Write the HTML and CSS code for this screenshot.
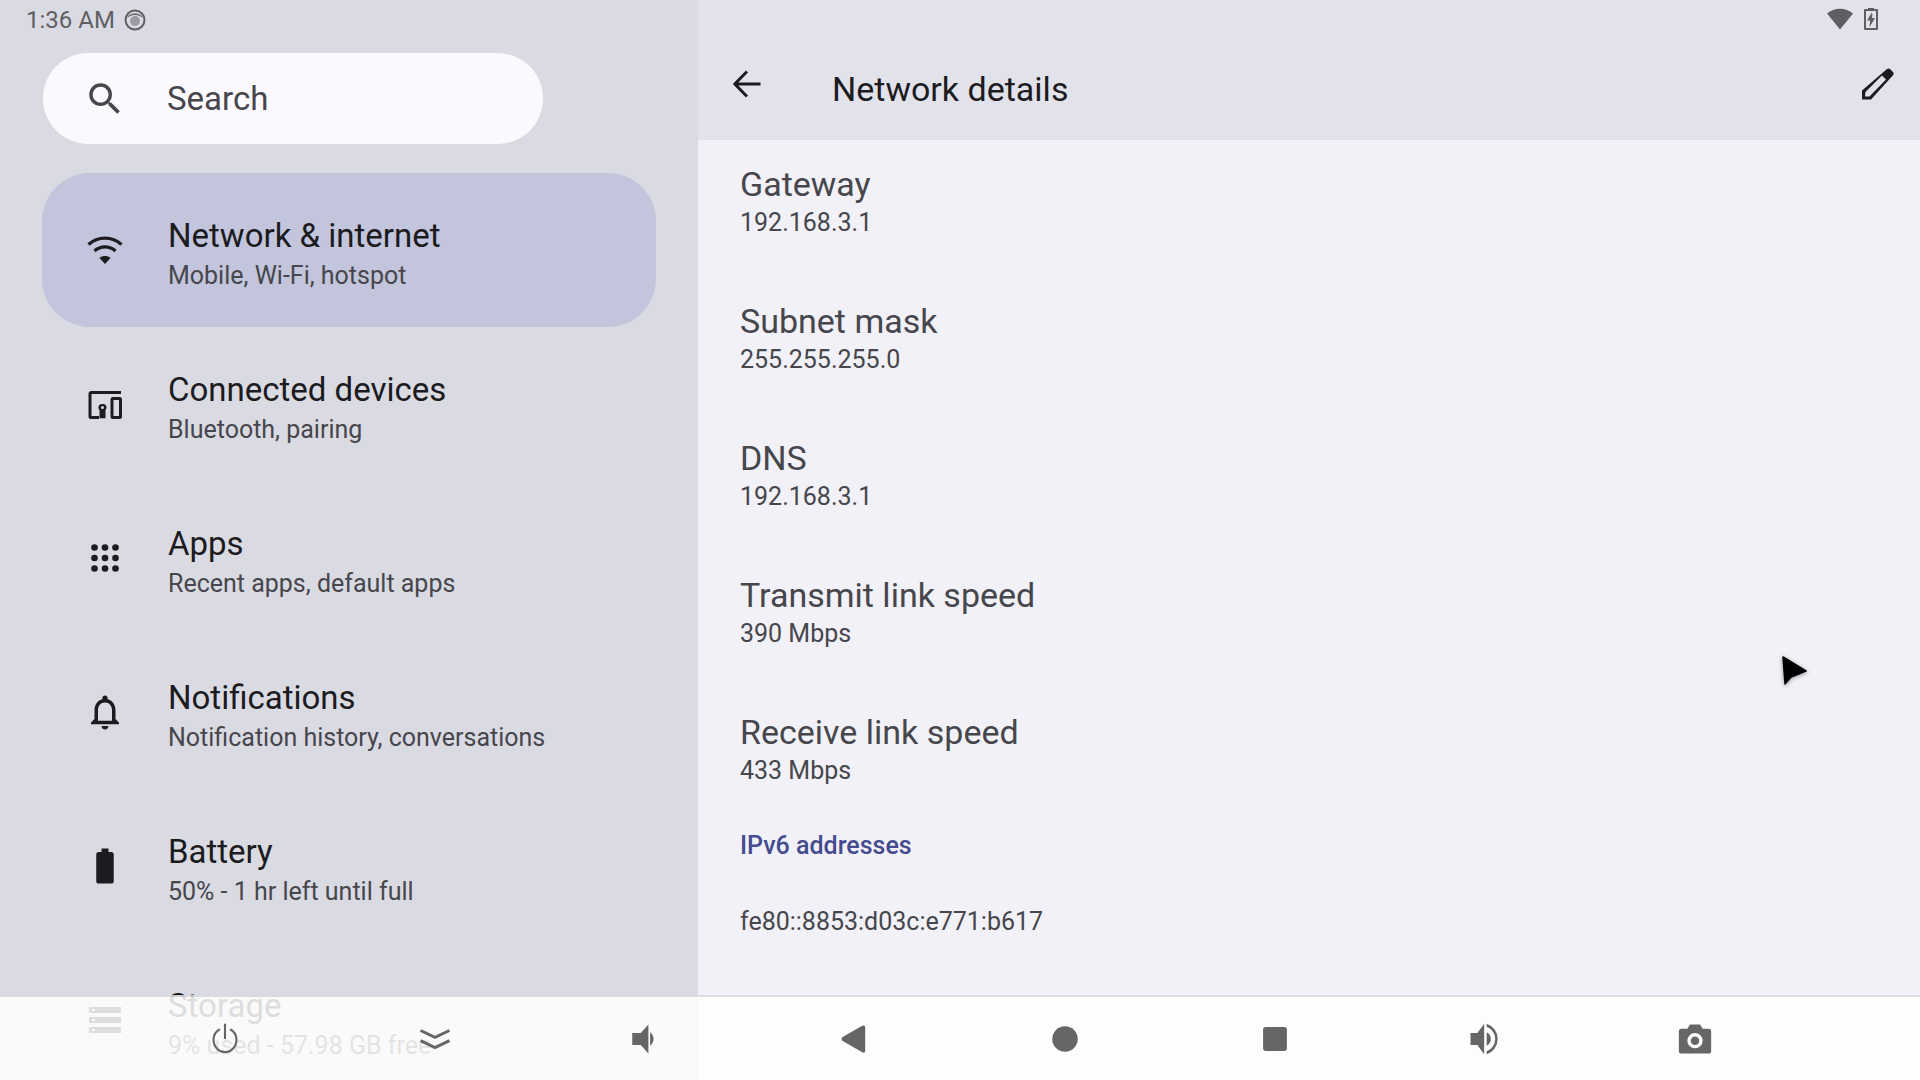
FILE: index.html
```html
<!DOCTYPE html>
<html lang="en">
<head>
  <meta charset="UTF-8">
  <title>Network details</title>
  <link rel="stylesheet" href="styles.css">
</head>
<body>
  <div class="screen">
    <aside class="sidebar">
      <div class="status-left">
        <span class="clock">1:36 AM</span>
        <svg class="face" viewBox="0 0 22 22"><circle cx="11" cy="11" r="9.5" fill="none" stroke="#5f5f63" stroke-width="2"/><path d="M3 9c2-6 14-6 16 0-3-2-4-3-8-3S6 7 3 9z" fill="#5f5f63"/><circle cx="11" cy="12" r="5" fill="#9a9aa0"/></svg>
      </div>
      <div class="search">
        <svg class="search-icon" viewBox="0 0 24 24"><path d="M15.5 14h-.79l-.28-.27A6.471 6.471 0 0 0 16 9.5 6.5 6.5 0 1 0 9.5 16c1.61 0 3.09-.59 4.23-1.57l.27.28v.79l5 4.99L20.49 19l-4.99-5zm-6 0C7.01 14 5 11.99 5 9.5S7.01 5 9.5 5 14 7.01 14 9.5 11.99 14 9.5 14z"/></svg>
        <span>Search</span>
      </div>
      <nav class="menu">
        <div class="menu-item active">
          <svg class="menu-icon" viewBox="0 0 42 42"><g fill="none" stroke="#1c1b20" stroke-width="3.4"><path d="M4.5 15.5c9.5-8.5 23.5-8.5 33 0"/><path d="M10.5 22c6-5.5 15-5.5 21 0"/></g><path d="M21 35l-5.5-6c3-2.6 8-2.6 11 0z" fill="#1c1b20"/></svg>
          <div class="menu-text"><div class="menu-title">Network &amp; internet</div><div class="menu-sub">Mobile, Wi-Fi, hotspot</div></div>
        </div>
        <div class="menu-item">
          <svg class="menu-icon" viewBox="0 0 42 42"><g fill="none" stroke="#1c1b20" stroke-width="3"><path d="M37 9.500H7.500a1.500 1.500 0 0 0-1.500 1.500v22.500a1 1 0 0 0 1 1h8"/><rect x="28" y="15.500" width="8.500" height="19" rx="1"/></g><path d="M18.500 21a3.600 3.600 0 0 1 3 6.200v8h-6v-8a3.600 3.600 0 0 1 3-6.200z" fill="#1c1b20"/><circle cx="18.500" cy="24.500" r="1.500" fill="#dadae3"/></svg>
          <div class="menu-text"><div class="menu-title">Connected devices</div><div class="menu-sub">Bluetooth, pairing</div></div>
        </div>
        <div class="menu-item">
          <svg class="menu-icon" viewBox="0 0 42 42" fill="#1c1b20"><circle cx="10.500" cy="10.500" r="3.300"/><circle cx="21" cy="10.500" r="3.300"/><circle cx="31.500" cy="10.500" r="3.300"/><circle cx="10.500" cy="21" r="3.300"/><circle cx="21" cy="21" r="3.300"/><circle cx="31.500" cy="21" r="3.300"/><circle cx="10.500" cy="31.500" r="3.300"/><circle cx="21" cy="31.500" r="3.300"/><circle cx="31.500" cy="31.500" r="3.300"/></svg>
          <div class="menu-text"><div class="menu-title">Apps</div><div class="menu-sub">Recent apps, default apps</div></div>
        </div>
        <div class="menu-item">
          <svg class="menu-icon" viewBox="0 0 24 24" fill="#1c1b20"><path d="M12 22c1.100 0 2-.9 2-2h-4c0 1.100.9 2 2 2zm6-6v-5c0-3.070-1.630-5.640-4.500-6.320V4c0-.83-.67-1.500-1.500-1.500s-1.500.67-1.500 1.500v.68C7.640 5.360 6 7.920 6 11v5l-2 2v1h16v-1l-2-2zm-2 1H8v-6c0-2.480 1.510-4.500 4-4.500s4 2.020 4 4.500v6z"/></svg>
          <div class="menu-text"><div class="menu-title">Notifications</div><div class="menu-sub">Notification history, conversations</div></div>
        </div>
        <div class="menu-item">
          <svg class="menu-icon" viewBox="0 0 24 24" fill="#1c1b20"><path d="M15.670 4H14V2h-4v2H8.330C7.600 4 7 4.600 7 5.330v15.330C7 21.400 7.600 22 8.330 22h7.330c.74 0 1.340-.6 1.340-1.330V5.330C17 4.600 16.400 4 15.670 4z"/></svg>
          <div class="menu-text"><div class="menu-title">Battery</div><div class="menu-sub">50% - 1 hr left until full</div></div>
        </div>
        <div class="menu-item">
          <svg class="menu-icon" viewBox="0 0 42 42" fill="#1c1b20"><path fill-rule="evenodd" d="M5 8h32v6H5zM8 10v2h3v-2zM5 18h32v6H5zM8 20v2h3v-2zM5 28h32v6H5zM8 30v2h3v-2z"/></svg>
          <div class="menu-text"><div class="menu-title">Storage</div><div class="menu-sub">9% used - 57.98 GB free</div></div>
        </div>
      </nav>
    </aside>

    <main class="details">
      <header class="appbar">
        <div class="status-right">
          <svg class="wifi-status" viewBox="0 0 26 22"><path d="M13 21.500L0 5.500C7-1 19-1 26 5.500z" fill="#5f5f63"/></svg>
          <svg class="battery-status" viewBox="0 0 14 22"><path fill-rule="evenodd" d="M4 0h6v1h3a1 1 0 0 1 1 1v19a1 1 0 0 1-1 1H1a1 1 0 0 1-1-1V2a1 1 0 0 1 1-1h3zM2 3v17h10V3zM8 4L3 12.500h3.200L5.500 19l5.500-9H7.500z" fill="#5f5f63"/><path d="M8.500 5.500L4.500 12h2.500L6.500 17l4-6.500H8z" fill="#5f5f63"/></svg>
        </div>
        <div class="toolbar">
          <svg class="back" viewBox="0 0 28 28"><path d="M27.500 14H3M14 1.500L1.800 14 14 26.500" fill="none" stroke="#1c1b20" stroke-width="3"/></svg>
          <h1>Network details</h1>
          <svg class="edit" viewBox="0 0 32 32"><path fill-rule="evenodd" d="M25 1a2.500 2.500 0 0 1 3 0l3 3a2.500 2.500 0 0 1 0 3.200L9 31.500H0v-9zM3.500 24l-.5 4.500h4.500L24 11.500l-4-4z" fill="#1c1b20"/></svg>
        </div>
      </header>
      <section class="rows">
        <div class="row"><div class="row-title">Gateway</div><div class="row-value">192.168.3.1</div></div>
        <div class="row"><div class="row-title">Subnet mask</div><div class="row-value">255.255.255.0</div></div>
        <div class="row"><div class="row-title">DNS</div><div class="row-value">192.168.3.1</div></div>
        <div class="row"><div class="row-title">Transmit link speed</div><div class="row-value">390 Mbps</div></div>
        <div class="row"><div class="row-title">Receive link speed</div><div class="row-value">433 Mbps</div></div>
        <div class="group-title">IPv6 addresses</div>
        <div class="row-value address">fe80::8853:d03c:e771:b617</div>
      </section>
    </main>
  </div>

  <svg class="cursor" viewBox="0 0 28 32"><path d="M3 2l23 14-15 6-6 7z" fill="#000" stroke="#000" stroke-width="1.500" stroke-linejoin="round"/></svg>

  <footer class="navbar">
    <div class="nav-slot"><svg viewBox="0 0 40 40" fill="none" stroke="#666" stroke-width="2.500"><path d="M20 2v18"/><path d="M14 8.500C9 11 6.500 15.500 6.500 21a13.500 14.500 0 0 0 27 0c0-5.500-2.500-10-7.500-12.500"/></svg></div>
    <div class="nav-slot"><svg viewBox="0 0 40 40" fill="none" stroke="#666" stroke-width="3.500"><path d="M3 10l17 8 17-8"/><path d="M3 22l17 8 17-8"/></svg></div>
    <div class="nav-slot"><svg viewBox="0 0 40 40" fill="#666"><path d="M5 13h10L24 3v34L15 27H5z"/><path d="M26 12a10 10 0 0 1 0 16z"/></svg></div>
    <div class="nav-slot"><svg viewBox="0 0 40 40" fill="#666"><path d="M30 4a2 2 0 0 1 2 2v28a2 2 0 0 1-3.500 1.500L5 22a3 3 0 0 1 0-4L28.500 4.500A2 2 0 0 1 30 4z"/></svg></div>
    <div class="nav-slot"><svg viewBox="0 0 40 40" fill="#666"><circle cx="20" cy="20" r="15"/></svg></div>
    <div class="nav-slot"><svg viewBox="0 0 40 40" fill="#666"><rect x="6" y="6" width="28" height="28" rx="3"/></svg></div>
    <div class="nav-slot"><svg viewBox="0 0 40 40" fill="#666"><path d="M3 13h8L19 2v36l-8-11H3z"/><path d="M22 12a9 9 0 0 1 0 16z"/><path d="M22 2a19 19 0 0 1 0 36v-3.500a15.500 15.500 0 0 0 0-29z"/></svg></div>
    <div class="nav-slot"><svg viewBox="0 0 40 40"><path fill-rule="evenodd" d="M14 3h12l3 5h7a3 3 0 0 1 3 3v23a3 3 0 0 1-3 3H4a3 3 0 0 1-3-3V11a3 3 0 0 1 3-3h7zM20 13a9 9 0 1 0 0 18 9 9 0 0 0 0-18zM20 17a5 5 0 1 1 0 10 5 5 0 0 1 0-10z" fill="#666"/></svg></div>
  </footer>
</body>
</html>
```

FILE: styles.css
```css
* {
  box-sizing: border-box;
}

html, body {
  margin: 0;
  height: 100%;
  overflow: hidden;
}

body {
  position: relative;
  font-family: Roboto, sans-serif;
  color: #1c1b20;
}

.screen {
  display: flex;
  height: 100vh;
}

/* left column */
.sidebar {
  width: 698px;
  flex-shrink: 0;
  background-color: #dadae3;
  overflow: hidden;
}

.status-left {
  height: 40px;
  padding-left: 26px;
  display: flex;
  align-items: center;
  gap: 9px;
  color: #5f5f63;
  font-size: 24px;
}

.face {
  width: 22px;
  height: 22px;
}

.search {
  width: 500px;
  height: 91px;
  margin: 13px 0 0 43px;
  padding-left: 41px;
  display: flex;
  align-items: center;
  gap: 41px;
  background-color: #fbf9fe;
  border-radius: 46px;
  font-size: 33px;
  color: #46464c;
}

.search-icon {
  width: 42px;
  height: 42px;
  fill: #46464c;
}

.menu {
  margin: 29px 42px 0;
}

.menu-item {
  height: 154px;
  padding-left: 42px;
  display: flex;
  align-items: center;
  gap: 42px;
  border-radius: 48px;
}

.menu-item.active {
  background-color: #c3c5dc;
}

.menu-icon {
  width: 42px;
  height: 42px;
  flex-shrink: 0;
}

.menu-text {
  padding-top: 8px;
}

.menu-title {
  font-size: 33px;
  line-height: 42px;
}

.menu-sub {
  font-size: 25px;
  line-height: 36px;
  margin-top: 1px;
  color: #46464c;
}

/* right column */
.details {
  flex: 1;
  background-color: #f1f1f7;
}

.appbar {
  height: 140px;
  background-color: #e2e2eb;
}

.status-right {
  height: 40px;
  padding: 8px 42px 0 0;
  display: flex;
  justify-content: flex-end;
  gap: 11px;
}

.wifi-status {
  width: 26px;
  height: 22px;
}

.battery-status {
  width: 14px;
  height: 22px;
}

.toolbar {
  height: 100px;
  padding: 0 26px 0 35px;
  display: flex;
  align-items: flex-start;
}

.back {
  width: 28px;
  height: 28px;
  margin-top: 30px;
}

.toolbar h1 {
  flex: 1;
  margin: 28px 0 0 71px;
  font-size: 34px;
  font-weight: 400;
  line-height: 42px;
}

.edit {
  width: 32px;
  height: 32px;
  margin-top: 28px;
}

.rows {
  padding-left: 42px;
}

.row {
  height: 137px;
  padding-top: 23px;
}

.row-title {
  font-size: 34px;
  line-height: 42px;
  color: #46464c;
}

.row-value {
  font-size: 25px;
  line-height: 36px;
  color: #46464c;
}

.group-title {
  margin-top: 3px;
  font-size: 25px;
  font-weight: 500;
  line-height: 36px;
  color: #454b8f;
}

.address {
  margin-top: 40px;
}

/* things lying over the page */
.navbar {
  position: absolute;
  left: 0;
  right: 0;
  bottom: 0;
  height: 85px;
  padding: 0 120px;
  display: grid;
  grid-template-columns: repeat(8, 1fr);
  background-color: rgba(255, 255, 255, 0.85);
  border-top: 2px solid rgba(0, 0, 0, 0.12);
}

.nav-slot {
  display: flex;
  align-items: center;
  justify-content: center;
}

.nav-slot svg {
  width: 34px;
  height: 34px;
}

.cursor {
  position: absolute;
  left: 1780px;
  top: 655px;
  width: 28px;
  height: 32px;
  filter: drop-shadow(0 1px 2px rgba(0, 0, 0, 0.4));
}
```
